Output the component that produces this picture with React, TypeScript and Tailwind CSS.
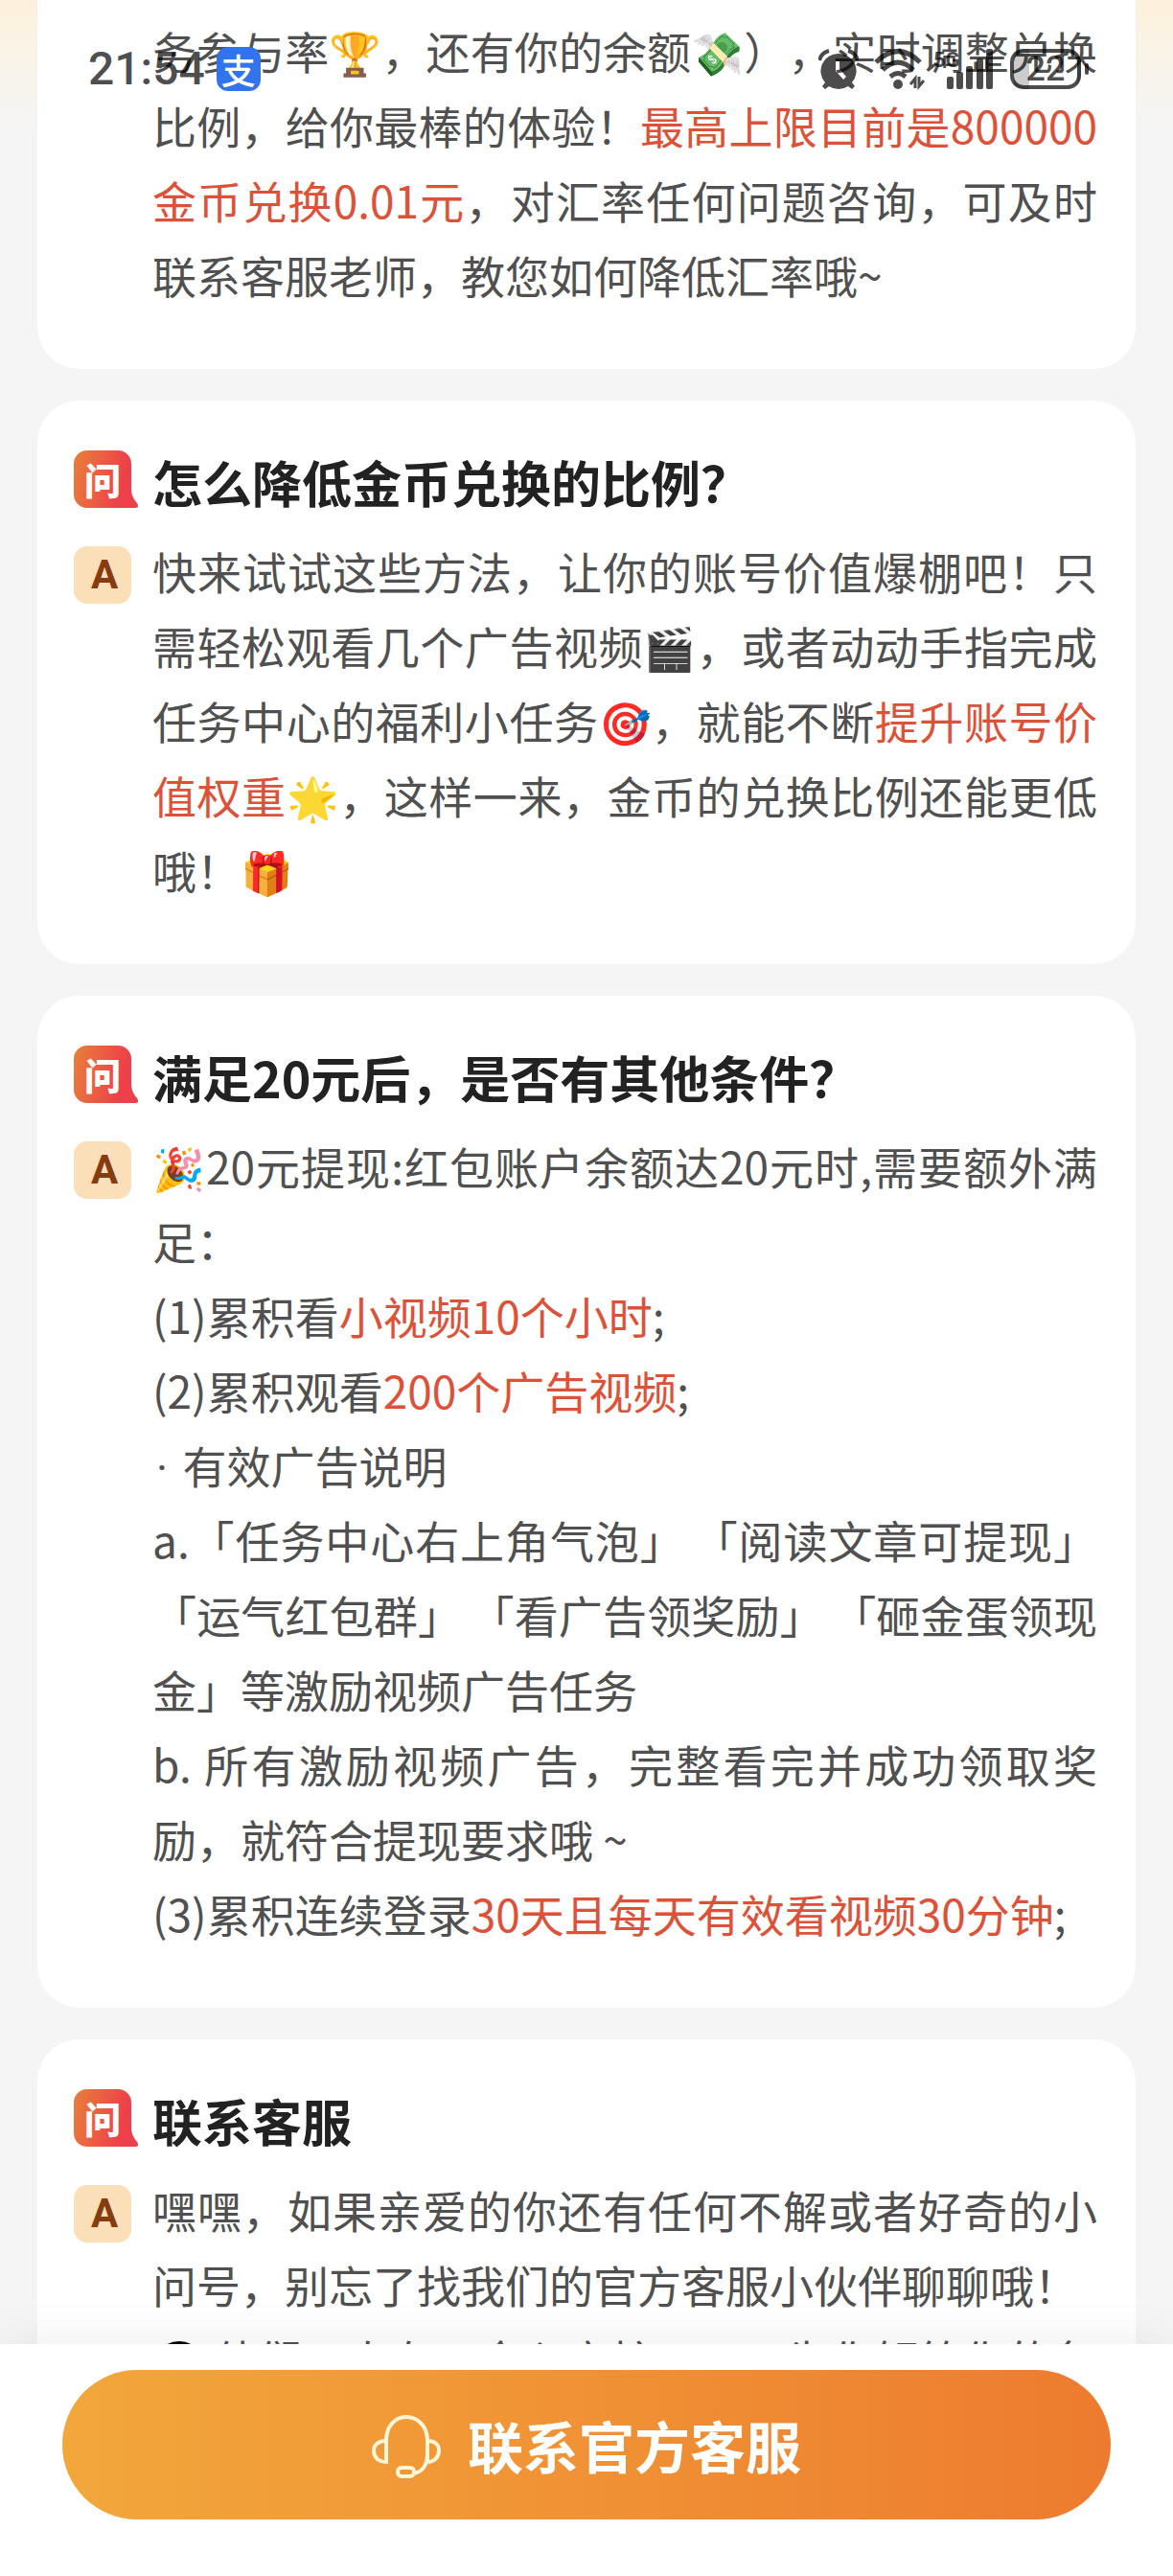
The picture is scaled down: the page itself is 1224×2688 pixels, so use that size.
import type { ReactNode } from 'react'

function Hot({ children }: { children: ReactNode }) {
  return <span className="text-[#dc5239]">{children}</span>
}

function Emoji({ children }: { children: ReactNode }) {
  return <span className="text-[44px] leading-none">{children}</span>
}

// narrow blank between quoted names
function Gap() {
  return <span className="text-4xl leading-none"> </span>
}

function AskIcon() {
  return (
    <span className="relative flex h-15 w-15 shrink-0 items-center justify-center text-[38px] font-black text-white">
      <svg viewBox="0 0 68 60" className="absolute left-0 top-0 h-15 w-17">
        <defs>
          <linearGradient id="ask" x1="0" y1="0" x2="1" y2="0.2">
            <stop offset="0" stopColor="#e8803a" />
            <stop offset="0.85" stopColor="#ee404a" />
          </linearGradient>
        </defs>
        <path
          d="M14 0H46A14 14 0 0 1 60 14V40C60 46 62 50 66 55C68 58 67 60 64 60H14A14 14 0 0 1 0 46V14A14 14 0 0 1 14 0z"
          fill="url(#ask)"
        />
      </svg>
      <span className="relative leading-none">问</span>
    </span>
  )
}

function AnswerIcon() {
  return (
    <span className="flex h-15 w-15 shrink-0 items-center justify-center rounded-[14px] bg-[#fbdfb8] pl-1 font-['Roboto',sans-serif] text-[42px] font-bold leading-none text-[#863b10]">
      A
    </span>
  )
}

function Card({ title, children }: { title: string; children: ReactNode }) {
  return (
    <section className="shrink-0 rounded-[44px] bg-white pb-15 pl-[38px] pr-10 pt-[52px]">
      <div className="flex gap-[22px]">
        <AskIcon />
        <h2 className="text-[52px] font-bold leading-[66px] text-[#222]">{title}</h2>
      </div>
      <div className="mt-[34px] flex gap-[22px]">
        <AnswerIcon />
        <div className="-mt-[14px] min-w-0 flex-1 text-justify">{children}</div>
      </div>
    </section>
  )
}

function HeadsetIcon() {
  return (
    <svg viewBox="0 0 72 72" className="h-18 w-18" fill="none" stroke="#fff6d8" strokeWidth="4">
      <path d="M15 52V32C15 17 24 7 36 7S58 17 58 32V46C58 58 52 65 43 66" />
      <path d="M15 32C7 32 2 36 2 42S6 54 15 54zM58 32C66 32 70 36 70 42S66 54 58 54z" />
      <rect x="27" y="60" width="17" height="9" rx="4" />
    </svg>
  )
}

function StatusBar() {
  return (
    <div className="absolute inset-x-0 top-0 flex items-center justify-between pl-[92px] pr-[88px] pt-12 text-black/70">
      <div className="flex items-center gap-3">
        <span className="font-['Roboto',sans-serif] text-5xl font-medium leading-none">21:54</span>
        <span className="flex h-[46px] w-[46px] items-center justify-center rounded-xl bg-[#3273ee] text-4xl font-medium leading-none text-white">
          支
        </span>
      </div>
      <div className="flex items-center">
        <svg viewBox="0 0 42 44" className="mr-4 h-11 w-[42px]" fill="currentColor">
          <path
            fillRule="evenodd"
            d="M21 6a18 18 0 0 1 14 30l3 4-3 3-4-3a18 18 0 0 1-20 0l-4 3-3-3 3-4A18 18 0 0 1 21 6zm-3 8v10l8 9 3-3-7-8V14z"
          />
          <path d="M1 13q2-8 10-10M41 13q-2-8-10-10" fill="none" stroke="currentColor" strokeWidth="4" />
        </svg>
        <svg viewBox="0 0 54 44" className="mr-2 h-11 w-[54px]" fill="none" stroke="currentColor" strokeWidth="5">
          <path d="M2 15Q25-8 48 15M9 23Q25 7 41 23M17 30Q25 23 33 30" />
          <circle cx="25" cy="38" r="5" fill="currentColor" stroke="none" />
          <path d="M43 42V32l-5 6M47 30v10l5-6" strokeWidth="3" />
        </svg>
        <svg viewBox="0 0 64 44" className="mr-4 h-11 w-16" fill="currentColor">
          <text x="0" y="20" fontSize="22" fontWeight="700" fontFamily="Roboto, sans-serif">
            5G
          </text>
          <rect x="14" y="30" width="7" height="13" rx="2" />
          <rect x="24" y="25" width="7" height="18" rx="2" />
          <rect x="34" y="19" width="7" height="24" rx="2" />
          <rect x="45" y="11" width="7" height="32" rx="2" />
          <rect x="55" y="1" width="7" height="42" rx="2" />
        </svg>
        <span className="flex h-[42px] w-[74px] items-center justify-center rounded-[14px] border-4 border-current bg-linear-to-r from-black/20 from-25% to-transparent to-25% font-['Roboto',sans-serif] text-4xl font-medium leading-none">
          22
        </span>
        <span className="ml-1 h-3 w-1 rounded-full bg-current" />
      </div>
    </div>
  )
}

export default function App() {
  return (
    <div className="relative flex h-screen flex-col overflow-hidden bg-[#f5f5f5] font-['Noto_Sans_CJK_SC',sans-serif] text-[46px] leading-[78px] text-[#505050] [text-spacing-trim:space-all]">
      <main className="flex min-h-0 flex-1 flex-col gap-[33px] overflow-hidden bg-linear-to-b from-[#fdf1dc] to-[#f5f5f5] to-[130px] px-[39px]">
        <section className="shrink-0 rounded-b-[44px] bg-white pb-15 pl-[120px] pr-10 pt-[13px] text-justify">
          务参与率<Emoji>🏆</Emoji>，还有你的余额<Emoji>💸</Emoji>），实时调整兑换比例，给你最棒的体验！
          <Hot>最高上限目前是800000金币兑换0.01元</Hot>
          ，对汇率任何问题咨询，可及时联系客服老师，教您如何降低汇率哦~
        </section>
        <Card title="怎么降低金币兑换的比例？">
          <p>
            快来试试这些方法，让你的账号价值爆棚吧！只需轻松观看几个广告视频<Emoji>🎬</Emoji>
            ，或者动动手指完成任务中心的福利小任务<Emoji>🎯</Emoji>，就能不断
            <Hot>提升账号价值权重</Hot>
            <Emoji>🌟</Emoji>，这样一来，金币的兑换比例还能更低哦！<Emoji>🎁</Emoji>
          </p>
        </Card>
        <Card title="满足20元后，是否有其他条件？">
          <p><Emoji>🎉</Emoji>20元提现:红包账户余额达20元时,需要额外满足：</p>
          <p>(1)累积看<Hot>小视频10个小时</Hot>;</p>
          <p>(2)累积观看<Hot>200个广告视频</Hot>;</p>
          <p><span className="px-1 font-['Roboto',sans-serif] leading-none">· </span>有效广告说明</p>
          <p>
            a.「任务中心右上角气泡」<Gap />「阅读文章可提现」<Gap />「运气红包群」<Gap />「看广告领奖励」<Gap />
            「砸金蛋领现金」等激励视频广告任务
          </p>
          <p>b. 所有激励视频广告，完整看完并成功领取奖励，就符合提现要求哦 ~</p>
          <p>(3)累积连续登录<Hot>30天且每天有效看视频30分钟</Hot>;</p>
        </Card>
        <Card title="联系客服">
          <p>嘿嘿，如果亲爱的你还有任何不解或者好奇的小问号，别忘了找我们的官方客服小伙伴聊聊哦！</p>
          <p>
            <svg viewBox="0 0 56 56" className="mr-2 inline-block h-14 w-14" fill="none" stroke="#000" strokeWidth="4">
              <circle cx="28" cy="28" r="24" />
            </svg>
            他们一直在，全心守护，一一为你解答你的各
          </p>
        </Card>
      </main>
      <footer className="bg-white px-[65px] pb-[59px] pt-[27px] shadow-[0_0_50px_rgba(0,0,0,0.08)]">
        <button
          type="button"
          className="flex h-39 w-full items-center justify-center gap-7 rounded-full bg-linear-to-r from-[#f2a73b] to-[#ed7b2f] text-[58px] font-bold text-white"
        >
          <HeadsetIcon />
          联系官方客服
        </button>
      </footer>
      <StatusBar />
    </div>
  )
}
